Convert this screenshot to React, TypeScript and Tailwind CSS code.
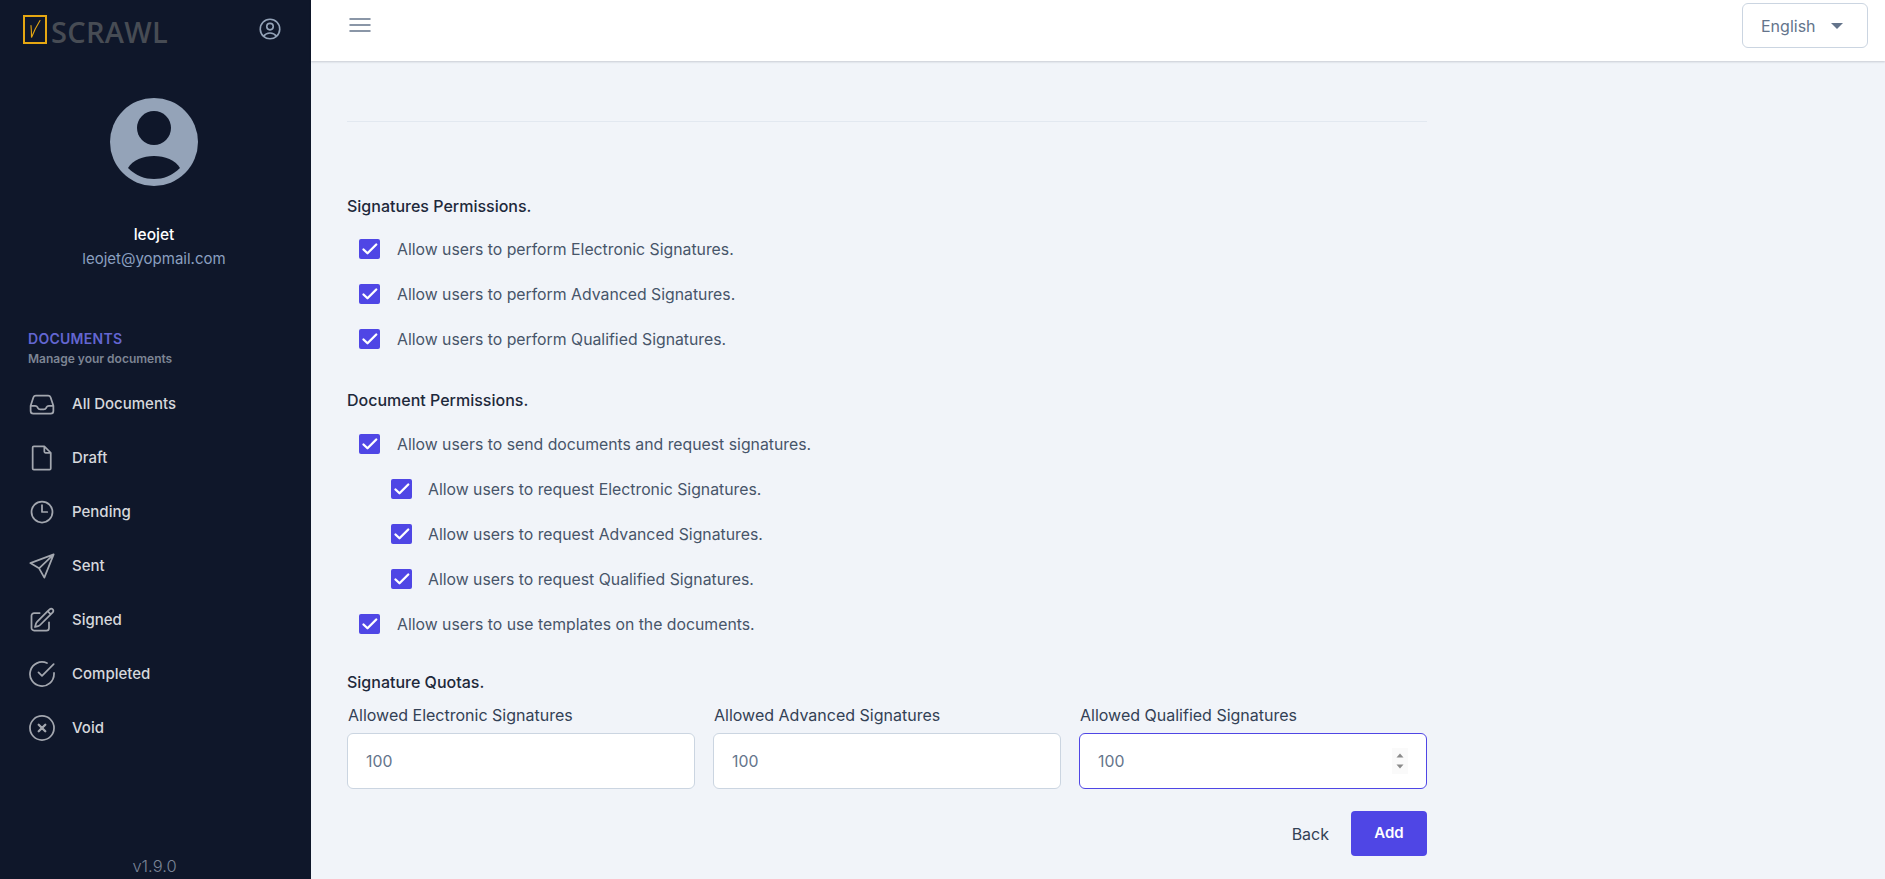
const navItems: { label: string; icon: React.ReactNode }[] = [
  {
    label: "All Documents",
    icon: (
      <path d="M2.25 13.5h3.86a2.25 2.25 0 0 1 2.012 1.244l.256.512a2.25 2.25 0 0 0 2.013 1.244h3.218a2.25 2.25 0 0 0 2.013-1.244l.256-.512a2.25 2.25 0 0 1 2.013-1.244h3.859M2.25 13.5V18a2.25 2.25 0 0 0 2.25 2.25h15A2.25 2.25 0 0 0 21.75 18v-4.5M2.25 13.5l2.41-7.23A2.25 2.25 0 0 1 6.794 4.73h10.412a2.25 2.25 0 0 1 2.134 1.54l2.41 7.23" />
    ),
  },
  {
    label: "Draft",
    icon: <path d="M5 2h9l5.5 5.5V21a1 1 0 0 1-1 1H5a1 1 0 0 1-1-1V3a1 1 0 0 1 1-1Zm9 0v4.5a1 1 0 0 0 1 1h4.5" />,
  },
  {
    label: "Pending",
    icon: <path d="M12 6v6h4.5m4.5 0a9 9 0 1 1-18 0 9 9 0 0 1 18 0Z" />,
  },
  {
    label: "Sent",
    icon: <path d="M22 2 2 9.5l7.5 4.5L14 22 22 2ZM22 2 9.5 14" />,
  },
  {
    label: "Signed",
    icon: (
      <path d="m16.862 4.487 1.687-1.688a1.875 1.875 0 1 1 2.652 2.652L10.582 16.07a4.5 4.5 0 0 1-1.897 1.13L6 18l.8-2.685a4.5 4.5 0 0 1 1.13-1.897l8.932-8.931Zm0 0L19.5 7.125M18 14v4.75A2.25 2.25 0 0 1 15.75 21H5.25A2.25 2.25 0 0 1 3 18.75V8.25A2.25 2.25 0 0 1 5.25 6H10" />
    ),
  },
  {
    label: "Completed",
    icon: <path d="M22.3 11.1V12a10.3 10.3 0 1 1-6.1-9.4M22 3.5 12 13.6l-3-3" />,
  },
  {
    label: "Void",
    icon: (
      <>
        <path d="m9.2 9.2 5.6 5.6m0-5.6-5.6 5.6" strokeWidth="2" />
        <circle cx="12" cy="12" r="10.3" />
      </>
    ),
  },
];

function Check({ label, indent }: { label: string; indent?: boolean }) {
  return (
    <div className={`flex h-[45px] items-start pt-[12px] ${indent ? "pl-[44px]" : "pl-[12px]"}`}>
      <span className="flex h-5 w-[21px] shrink-0 items-center justify-center rounded-[2px] bg-[#4f46e5]">
        <svg viewBox="0 0 16 16" className="h-5 w-5" fill="none" stroke="white" strokeWidth="1.9" strokeLinecap="round" strokeLinejoin="round">
          <path d="M2.8 8.4 6 11.4 13 4.4" />
        </svg>
      </span>
      <span className={`text-[15.8px] leading-[22px] text-[#475569] ${indent ? "ml-[16px]" : "ml-[17px]"}`}>{label}</span>
    </div>
  );
}

function Quota({ label, focused }: { label: string; focused?: boolean }) {
  return (
    <div className="w-[348px]">
      <div className="mb-[7px] h-[22px] pl-[1px] text-[16px] leading-[22px] text-[#334155]">{label}</div>
      <div
        className={`flex h-[56px] items-center justify-between rounded-[6px] border bg-white pl-[18px] pr-[18px] text-[15.8px] text-[#64748b] ${
          focused ? "border-[#4f46e5]" : "border-[#cbd5e1]"
        }`}
      >
        <span className="pt-[1px]">100</span>
        {focused && (
          <svg viewBox="0 0 16 26" className="h-[26px] w-4 bg-[#fafafa]" fill="#8a8a8a">
            <path d="M8 5.5 11.5 9.5H4.5Z" />
            <path d="M8 20.5 11.5 16.5H4.5Z" />
          </svg>
        )}
      </div>
    </div>
  );
}

export default function App() {
  return (
    <div className="flex h-[879px] overflow-hidden bg-[#f1f4f9] font-['Inter',sans-serif]">
      <aside className="flex w-[311px] shrink-0 flex-col bg-[#0f172a]">
        <div className="flex h-[60px] items-start justify-between pl-[23px] pr-[29px] pt-[15px]">
          <div className="flex items-center">
            <span className="flex h-[29px] w-[24px] items-center justify-center border-2 border-[#e5a712]">
              <svg viewBox="0 0 20 24" className="h-[25px] w-5" fill="none" stroke="#e5a712" strokeWidth="1.1" strokeLinecap="round">
                <path d="M6 8 Q6.5 14 6.5 20 Q10 11 15 3" />
              </svg>
            </span>
            <span className="ml-[4px] mt-[3px] font-['Open_Sans',sans-serif] text-[29px] leading-[25px] font-semibold tracking-[0.01em] text-[#474c54]">
              SCRAWL
            </span>
          </div>
          <svg viewBox="0 0 24 24" className="-mr-[1px] mt-[1px] h-[26px] w-[26px]" fill="none" stroke="#94a3b8" strokeWidth="1.5" strokeLinecap="round" strokeLinejoin="round">
            <path d="M17.982 18.725A7.488 7.488 0 0 0 12 15.75a7.488 7.488 0 0 0-5.982 2.975m11.964 0a9 9 0 1 0-11.963 0m11.963 0A8.966 8.966 0 0 1 12 21a8.966 8.966 0 0 1-5.982-2.275M15 9.75a3 3 0 1 1-6 0 3 3 0 0 1 6 0Z" />
          </svg>
        </div>

        <div className="flex flex-col items-center pr-[3px]">
          <svg viewBox="0 0 88 88" className="mt-[38px] h-[88px] w-[88px]">
            <circle cx="44" cy="44" r="44" fill="#94a3b8" />
            <circle cx="44" cy="30" r="17" fill="#0f172a" />
            <path d="M18 70 C27 54 61 54 70 70 C62 78 53 81 44 81 C35 81 26 78 18 70Z" fill="#0f172a" />
          </svg>
          <div className="mt-[38px] text-[15.5px] leading-[22px] font-medium text-white">leojet</div>
          <div className="mt-[2px] text-[15px] leading-[22px] text-[#8ba0c0]">leojet@yopmail.com</div>
        </div>

        <div className="mt-[60px] pl-[28px]">
          <div className="text-[14px] leading-[18px] font-semibold tracking-[0.02em] text-[#6366d1]">DOCUMENTS</div>
          <div className="mt-[3px] text-[12px] leading-[16px] font-semibold text-[#7d8594]">Manage your documents</div>
        </div>

        <nav className="mt-[10px] flex flex-col">
          {navItems.map((n) => (
            <div key={n.label} className="flex h-[54px] items-center pl-[28px]">
              <svg viewBox="0 0 24 24" className="h-[28px] w-[28px] shrink-0" fill="none" stroke="#a3a7af" strokeWidth="1.5" strokeLinecap="round" strokeLinejoin="round">
                {n.icon}
              </svg>
              <span className="ml-[16px] text-[15px] font-medium text-[#d6d8dc]">{n.label}</span>
            </div>
          ))}
        </nav>

        <div className="mt-auto pb-[1px] pr-[2px] text-center text-[16.5px] leading-6 font-light text-[#7a8496]">v1.9.0</div>
      </aside>

      <div className="flex min-w-0 flex-1 flex-col">
        <header className="flex h-[61px] shrink-0 items-start justify-between bg-white pl-[37px] pr-[17px] pt-[3px] shadow-[0_1px_2px_rgba(15,23,42,0.18)]">
          <svg viewBox="0 0 24 24" className="mt-[10px] h-[24px] w-[24px]" fill="none" stroke="#64748b" strokeWidth="1.5" strokeLinecap="round">
            <path d="M2 6h20M2 12h20M2 18h20" />
          </svg>
          <div className="flex h-[45px] w-[126px] items-center rounded-[6px] border border-[#cbd5e1] bg-white pl-[18px] text-[16px] text-[#64748b]">
            English
            <svg viewBox="0 0 12 6" className="ml-[15px] h-[6px] w-[12px]" fill="#64748b">
              <path d="M0 0h12L6 6Z" />
            </svg>
          </div>
        </header>

        <main className="ml-[36px] w-[1080px]">
          <div className="mt-[60px] border-t border-[#e2e8f0]" />
          <h3 className="mt-[73px] text-[16px] leading-[22px] font-medium text-[#1e293b]">Signatures Permissions.</h3>
          <div className="mt-[10px]">
            <Check label="Allow users to perform Electronic Signatures." />
            <Check label="Allow users to perform Advanced Signatures." />
            <Check label="Allow users to perform Qualified Signatures." />
          </div>
          <h3 className="mt-[27px] text-[16px] leading-[22px] font-medium text-[#1e293b]">Document Permissions.</h3>
          <div className="mt-[11px]">
            <Check label="Allow users to send documents and request signatures." />
            <Check indent label="Allow users to request Electronic Signatures." />
            <Check indent label="Allow users to request Advanced Signatures." />
            <Check indent label="Allow users to request Qualified Signatures." />
            <Check label="Allow users to use templates on the documents." />
          </div>
          <h3 className="mt-[24px] text-[16px] leading-[22px] font-medium text-[#1e293b]">Signature Quotas.</h3>
          <div className="mt-[11px] flex justify-between">
            <Quota label="Allowed Electronic Signatures" />
            <Quota label="Allowed Advanced Signatures" />
            <Quota label="Allowed Qualified Signatures" focused />
          </div>
          <div className="mt-[22px] flex items-center justify-end">
            <span className="text-[16px] text-[#334155]">Back</span>
            <button className="ml-[22px] h-[45px] w-[76px] rounded-[4px] bg-[#4f46e5] text-[15px] font-semibold text-white">Add</button>
          </div>
        </main>
      </div>
    </div>
  );
}
